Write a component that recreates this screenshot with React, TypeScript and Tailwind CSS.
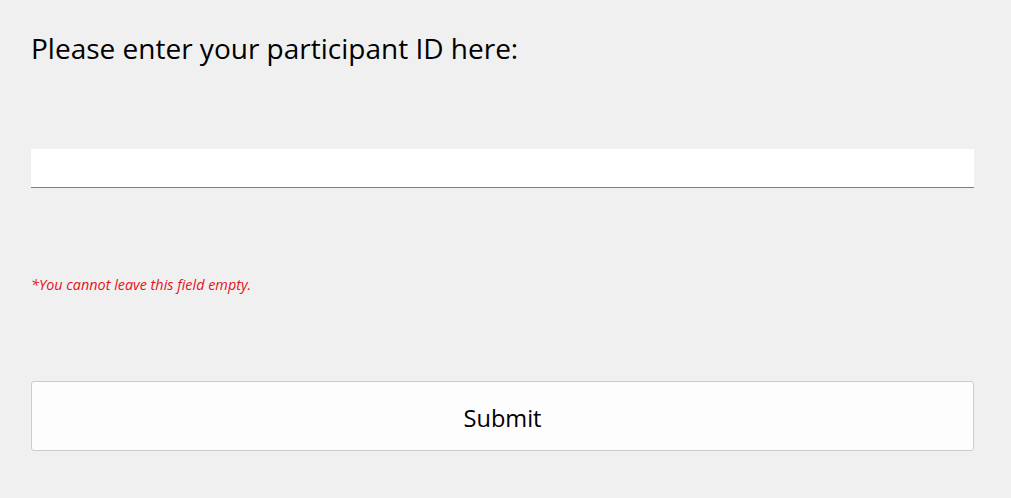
export default function App() {
  return (
    <div
      className="min-h-[498px] w-full bg-[#f0f0f0] pl-[31px] pt-[28px]"
      style={{ fontFamily: '"Open Sans", "Noto Sans", sans-serif' }}
    >
      <div className="flex w-[943px] flex-col">
        <h1 className="text-[28px] leading-[40px] text-black">Please enter your participant ID here:</h1>

        <input
          type="text"
          className="mt-[81px] h-[39px] w-full border-b border-[#808080] bg-white px-2 text-base outline-none"
        />

        <p className="mt-[87px] text-[14.4px] leading-[20px] italic text-[#e81123]">
          *You cannot leave this field empty.
        </p>

        <button
          type="button"
          className="mt-[86px] h-[70px] w-full rounded-[3px] border border-[#cccccc] bg-[#fdfdfd] pt-[5px] text-[23.6px] text-black"
        >
          Submit
        </button>
      </div>
    </div>
  );
}
